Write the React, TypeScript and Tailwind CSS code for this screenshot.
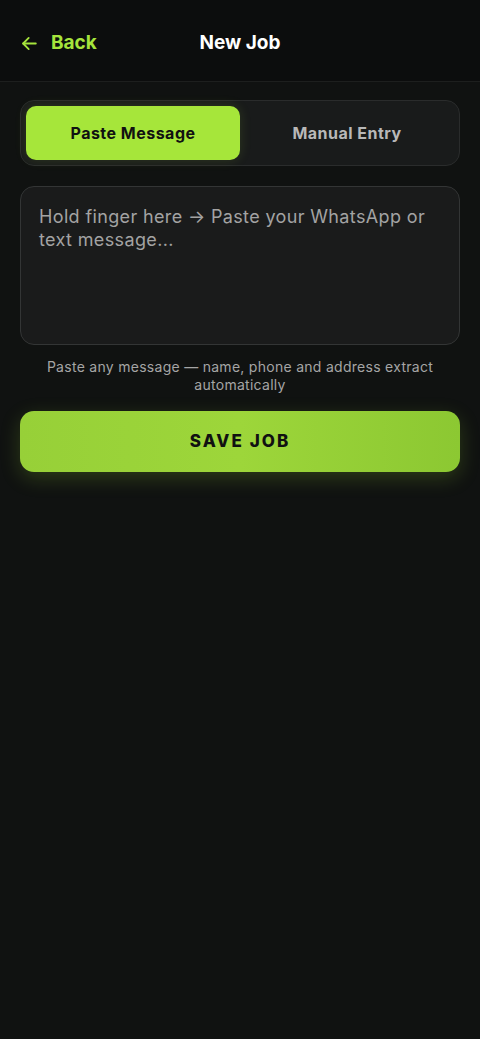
import React from "react";

export default function App() {
  return (
    <div
      className="min-h-[1039px] w-full bg-[#101211] text-white"
      style={{ fontFamily: "Inter, 'Noto Sans', sans-serif" }}
    >
      <header className="grid h-[82px] grid-cols-3 items-center border-b border-[#1d1f1e] bg-[#0c0d0d] px-5 pt-[5px]">
        <button className="flex items-center gap-[12px] text-[#a6e43c]">
          <svg width="19" height="19" viewBox="0 0 24 24" fill="none" stroke="currentColor" strokeWidth="2.3" strokeLinecap="round" strokeLinejoin="round">
            <path d="M20 12H4" />
            <path d="M11 19l-7-7 7-7" />
          </svg>
          <span className="text-[19px] font-bold">Back</span>
        </button>
        <h1 className="text-center text-[19px] font-bold text-white">New Job</h1>
        <div />
      </header>

      <main className="px-5 pt-[18px]">
        <div className="grid h-[66px] grid-cols-2 rounded-[14px] border border-[#2a2c2c] bg-[#191b1b] p-[5px]">
          <button className="rounded-[10px] bg-[#a6e63a] text-[16px] font-bold tracking-[0.03em] text-[#111] shadow-[0_0_12px_rgba(166,230,58,0.15)]">
            Paste Message
          </button>
          <button className="text-[16px] font-bold tracking-[0.03em] text-[#b8b8b8]">Manual Entry</button>
        </div>

        <textarea
          className="mt-5 block h-[159px] w-full resize-none rounded-[14px] border border-[#333535] bg-[#1a1b1b] px-[18px] pt-[18px] text-[18px] leading-[23px] tracking-[0.02em] text-white outline-none placeholder:text-[#a3a3a3]"
          placeholder="Hold finger here → Paste your WhatsApp or text message..."
        />

        <p className="mt-[13px] px-3 text-center text-[14px] leading-[18px] tracking-[0.02em] text-[#a5a5a5]">
          Paste any message — name, phone and address extract automatically
        </p>

        <button className="mt-[17px] flex h-[61px] w-full items-center justify-center rounded-[14px] bg-gradient-to-r from-[#97d038] via-[#9dd63a] to-[#8cc832] text-[17px] font-extrabold tracking-[0.12em] text-[#111] shadow-[0_6px_20px_rgba(150,210,50,0.22)]">
          SAVE JOB
        </button>
      </main>
    </div>
  );
}
